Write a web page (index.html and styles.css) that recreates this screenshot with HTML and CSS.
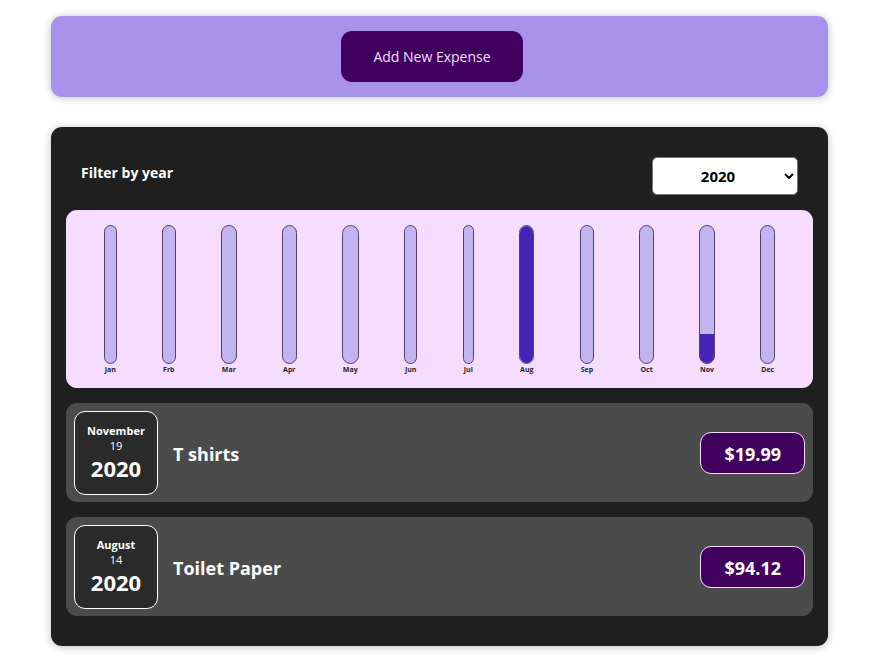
FILE: index.html
```html
<!DOCTYPE html>
<html lang="en">
<head>
<meta charset="utf-8">
<meta name="viewport" content="width=device-width, initial-scale=1">
<title>Expenses</title>
<link rel="stylesheet" href="styles.css">
</head>
<body>
<main class="page">
  <section class="new-expense">
    <button class="new-expense-button" type="button">Add New Expense</button>
  </section>

  <section class="expenses">
    <div class="filter">
      <label class="filter-label" for="year">Filter by year</label>
      <div class="filter-control">
        <select class="filter-select" id="year">
          <option>2022</option>
          <option>2021</option>
          <option selected>2020</option>
          <option>2019</option>
        </select>
        <svg class="filter-arrow" viewBox="0 0 10 6" aria-hidden="true"><path d="M1 1l4 4 4-4"/></svg>
      </div>
    </div>

    <div class="chart">
      <div class="chart-month"><div class="chart-bar"></div><span class="chart-label">Jan</span></div>
      <div class="chart-month"><div class="chart-bar"></div><span class="chart-label">Frb</span></div>
      <div class="chart-month"><div class="chart-bar"></div><span class="chart-label">Mar</span></div>
      <div class="chart-month"><div class="chart-bar"></div><span class="chart-label">Apr</span></div>
      <div class="chart-month"><div class="chart-bar"></div><span class="chart-label">May</span></div>
      <div class="chart-month"><div class="chart-bar"></div><span class="chart-label">Jun</span></div>
      <div class="chart-month"><div class="chart-bar"></div><span class="chart-label">Jul</span></div>
      <div class="chart-month"><div class="chart-bar"><div class="chart-fill" style="height:100%"></div></div><span class="chart-label">Aug</span></div>
      <div class="chart-month"><div class="chart-bar"></div><span class="chart-label">Sep</span></div>
      <div class="chart-month"><div class="chart-bar"></div><span class="chart-label">Oct</span></div>
      <div class="chart-month"><div class="chart-bar"><div class="chart-fill" style="height:21%"></div></div><span class="chart-label">Nov</span></div>
      <div class="chart-month"><div class="chart-bar"></div><span class="chart-label">Dec</span></div>
    </div>

    <ul class="expense-list">
      <li class="expense-item">
        <div class="date">
          <div class="date-month">November</div>
          <div class="date-day">19</div>
          <div class="date-year">2020</div>
        </div>
        <h2 class="expense-title">T shirts</h2>
        <div class="expense-price">$19.99</div>
      </li>
      <li class="expense-item">
        <div class="date">
          <div class="date-month">August</div>
          <div class="date-day">14</div>
          <div class="date-year">2020</div>
        </div>
        <h2 class="expense-title">Toilet Paper</h2>
        <div class="expense-price">$94.12</div>
      </li>
    </ul>
  </section>
</main>
</body>
</html>
```
FILE: styles.css
```css
* {
  box-sizing: border-box;
}

body {
  margin: 0;
  background: #fff;
  font-family: "Open Sans", "Noto Sans", sans-serif;
}

.page {
  display: flex;
  flex-direction: column;
  gap: 30px;
  padding: 16px 60px 16px 51px;
}

.new-expense,
.expenses {
  border-radius: 11px;
  box-shadow: 0 1px 8px rgba(0, 0, 0, 0.25);
}

.new-expense {
  display: flex;
  justify-content: center;
  padding: 15px 30px 15px 15px;
  background: #a892eb;
}

.new-expense-button {
  padding: 15px 32px;
  border: 0;
  border-radius: 11px;
  background: #40005d;
  color: #f6ddff;
  font-family: inherit;
  font-size: 14px;
  line-height: 21px;
}

.expenses {
  display: flex;
  flex-direction: column;
  gap: 15px;
  padding: 30px 15px;
  background: #1f1f1f;
}

.filter {
  display: flex;
  align-items: center;
  justify-content: space-between;
  padding: 0 15px;
}

.filter-label {
  padding-bottom: 6px;
  color: #fff;
  font-size: 14px;
  font-weight: 700;
  line-height: 20px;
}

.filter-control {
  position: relative;
}

.filter-select {
  display: block;
  width: 146px;
  height: 38px;
  padding: 0 14px 0 0;
  border: 1px solid #767676;
  border-radius: 5px;
  appearance: none;
  background: #fff;
  color: #000;
  font-family: inherit;
  font-size: 15px;
  font-weight: 700;
  text-align: center;
}

.filter-arrow {
  position: absolute;
  top: 16px;
  right: 4px;
  width: 10px;
  height: 6px;
  fill: none;
  stroke: #000;
  stroke-width: 2;
  pointer-events: none;
}

.chart {
  display: flex;
  justify-content: space-around;
  padding: 15px 15px 13px;
  border-radius: 11px;
  background: #f6ddff;
}

.chart-month {
  display: flex;
  flex-direction: column;
}

.chart-bar {
  display: flex;
  flex-direction: column;
  justify-content: flex-end;
  height: 139px;
  border: 1px solid #55406f;
  border-radius: 11px;
  background: #c2b4f0;
  overflow: hidden;
}

.chart-fill {
  background: #4722b6;
}

.chart-label {
  padding: 1px 1px 0;
  color: #1f1f1f;
  font-size: 7px;
  font-weight: 700;
  line-height: 10px;
  text-align: center;
}

.expense-list {
  display: flex;
  flex-direction: column;
  gap: 15px;
  margin: 0;
  padding: 0;
  list-style: none;
}

.expense-item {
  display: flex;
  align-items: center;
  gap: 15px;
  padding: 8px 8px 7px;
  border-radius: 11px;
  background: #4b4b4b;
  color: #fff;
}

.date {
  display: flex;
  flex-direction: column;
  justify-content: center;
  width: 84px;
  height: 84px;
  border: 1px solid #fff;
  border-radius: 11px;
  background: #2a2a2a;
  text-align: center;
}

.date-month {
  font-size: 11px;
  font-weight: 700;
  line-height: 15px;
}

.date-day {
  font-size: 11px;
  line-height: 15px;
}

.date-year {
  font-size: 22px;
  font-weight: 700;
  line-height: 30px;
}

.expense-title {
  flex: 1;
  margin: 0;
  padding-top: 2px;
  font-size: 18px;
  font-weight: 700;
  line-height: 24px;
}

.expense-price {
  padding: 9px 23px 7px;
  border: 1px solid #f6ddff;
  border-radius: 11px;
  background: #40005d;
  font-size: 18px;
  font-weight: 700;
  line-height: 24px;
}
```
